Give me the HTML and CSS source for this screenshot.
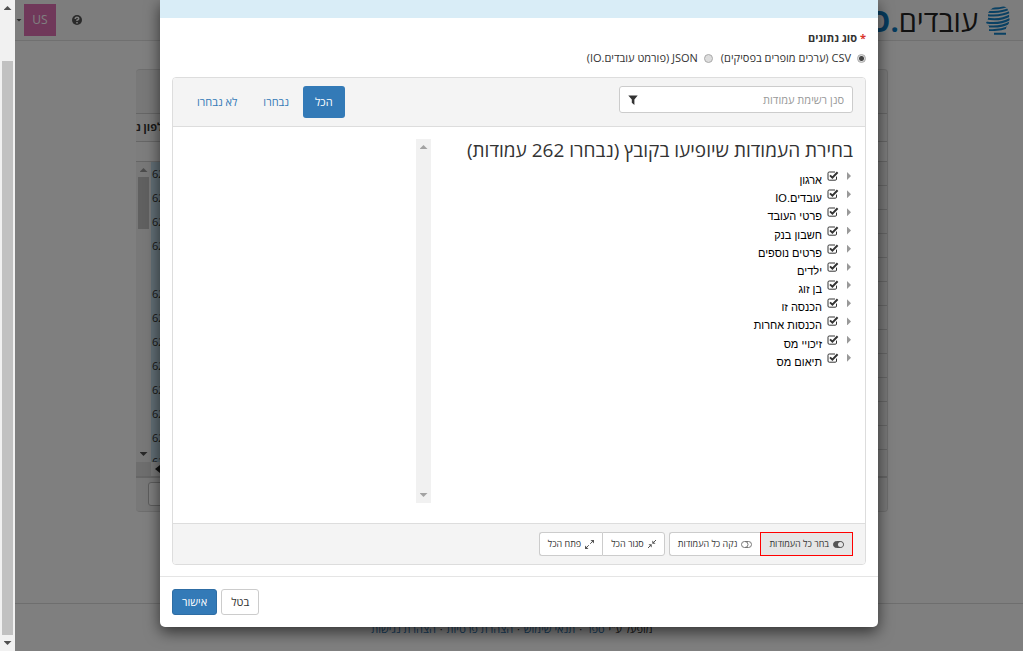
FILE: index.html
```html
<!DOCTYPE html>
<html lang="he" dir="rtl">
<head>
<meta charset="utf-8">
<title>עובדים.IO</title>
<link rel="stylesheet" href="styles.css">
</head>
<body>
<svg class="defs" aria-hidden="true">
  <symbol id="check" viewBox="0 0 12 12"><path d="M9.500 6.600V9a1.200 1.200 0 0 1-1.200 1.200H2.200A1.200 1.200 0 0 1 1 9V3.200A1.200 1.200 0 0 1 2.200 2H8" fill="none" stroke="currentColor"/><path d="M3 5.400l2.400 2.300L10.600 2.300" fill="none" stroke="currentColor" stroke-width="2"/></symbol>
  <symbol id="pencil" viewBox="0 0 10 12"><path d="M0 3l4-2-1 3-3 1zM0 8h2v3H0z" fill="currentColor"/></symbol>
</svg>
<div class="app">
  <div class="stage">
    <div class="page">
      <header class="navbar">
        <a class="brand" href="#">
          <svg width="24" height="29" viewBox="0 0 24 29" aria-hidden="true">
            <clipPath id="head"><path d="M2 7Q6 0 14 0Q21 0 22 4Q24 6 23 10Q25 16 20 22V29H8V25H3V20L0 17L2 13Z"/></clipPath>
            <g clip-path="url(#head)" fill="none" stroke="#1583c8" stroke-width="2"><path d="M0 2Q14 4 24-1M0 5.500Q14 7.500 24 2.500M0 9Q14 11 24 6M0 12.500Q14 15 24 9.500M0 16.500Q14 18.500 24 13M0 20Q14 22 24 16.500M2 24Q14 25 24 20.500M8 27.800H20"/></g>
          </svg>
          <span class="brand-name">עובדים<b>.IO</b></span>
        </a>
        <div class="nav-end">
          <svg width="10" height="10" viewBox="0 0 10 10" aria-hidden="true"><circle cx="5" cy="5" r="5" fill="#555"/><path d="M3.200 4q0-1.800 1.800-1.800T6.800 3.800Q6.800 4.600 5 5.300V6M5 7v1.400" fill="none" stroke="#fff" stroke-width="1.500"/></svg>
          <span class="avatar">US</span>
          <span class="caret"></span>
        </div>
      </header>
      <main class="grid-panel">
        <div class="grid-title"></div>
        <div class="grid-head"><svg width="10" height="12"><use href="#pencil"/></svg><b>טלפון נ</b></div>
        <div class="grid-filter"></div>
        <div class="grid-body">
          <div class="grid-rows">
            <div class="row"><svg width="10" height="12"><use href="#pencil"/></svg><span>62</span></div>
            <div class="row"><svg width="10" height="12"><use href="#pencil"/></svg><span>62</span></div>
            <div class="row"><svg width="10" height="12"><use href="#pencil"/></svg><span>62</span></div>
            <div class="row"><svg width="10" height="12"><use href="#pencil"/></svg><span>62</span></div>
            <div class="row"><svg width="10" height="12"><use href="#pencil"/></svg><span></span></div>
            <div class="row"><svg width="10" height="12"><use href="#pencil"/></svg><span>62</span></div>
            <div class="row"><svg width="10" height="12"><use href="#pencil"/></svg><span>62</span></div>
            <div class="row"><svg width="10" height="12"><use href="#pencil"/></svg><span>62</span></div>
            <div class="row"><svg width="10" height="12"><use href="#pencil"/></svg><span>62</span></div>
            <div class="row"><svg width="10" height="12"><use href="#pencil"/></svg><span>62</span></div>
            <div class="row"><svg width="10" height="12"><use href="#pencil"/></svg><span>62</span></div>
            <div class="row"><svg width="10" height="12"><use href="#pencil"/></svg><span>62</span></div>
            <div class="row"><svg width="10" height="12"><use href="#pencil"/></svg><span>62</span></div>
          </div>
          <div class="scroll grid-scroll"><i class="up"></i><i class="thumb"></i><i class="down"></i></div>
        </div>
        <div class="grid-hscroll"><i class="left"></i><i class="corner"></i></div>
        <div class="grid-foot"><span class="ghost"></span></div>
      </main>
      <footer class="page-foot">מופעל ע"י <a href="#">ספר</a> · <a href="#">תנאי שימוש</a> · <a href="#">הצהרת פרטיות</a> · <a href="#">הצהרת נגישות</a></footer>
    </div>
    <div class="backdrop">
      <form class="modal" role="dialog" aria-label="בחירת העמודות">
        <div class="modal-head"></div>
        <div class="modal-body">
          <fieldset>
            <legend><span class="star">*</span><span>סוג נתונים</span></legend>
            <div class="radios">
              <label><input type="radio" name="kind" checked> CSV (ערכים מופרים בפסיקים)</label>
              <label><input type="radio" name="kind"> JSON (פורמט עובדים.IO)</label>
            </div>
          </fieldset>
          <section class="panel">
            <div class="panel-head">
              <div class="search">
                <input type="text" placeholder="סנן רשימת עמודות" aria-label="סנן רשימת עמודות">
                <svg width="10" height="10" viewBox="0 0 10 10" aria-hidden="true"><path d="M.3.500h9.400L6.400 4.600V10L3.800 7.800V4.600z" fill="#333"/></svg>
              </div>
              <div class="pills">
                <button type="button" class="pill active">הכל</button>
                <button type="button" class="pill">נבחרו</button>
                <button type="button" class="pill">לא נבחרו</button>
              </div>
            </div>
            <div class="panel-body">
              <div class="columns">
                <h3>בחירת העמודות שיופיעו בקובץ (נבחרו 262 עמודות)</h3>
                <ul class="tree">
                  <li><i></i><svg><use href="#check"/></svg><span>ארגון</span></li>
                  <li><i></i><svg><use href="#check"/></svg><span>עובדים.IO</span></li>
                  <li><i></i><svg><use href="#check"/></svg><span>פרטי העובד</span></li>
                  <li><i></i><svg><use href="#check"/></svg><span>חשבון בנק</span></li>
                  <li><i></i><svg><use href="#check"/></svg><span>פרטים נוספים</span></li>
                  <li><i></i><svg><use href="#check"/></svg><span>ילדים</span></li>
                  <li><i></i><svg><use href="#check"/></svg><span>בן זוג</span></li>
                  <li><i></i><svg><use href="#check"/></svg><span>הכנסה זו</span></li>
                  <li><i></i><svg><use href="#check"/></svg><span>הכנסות אחרות</span></li>
                  <li><i></i><svg><use href="#check"/></svg><span>זיכויי מס</span></li>
                  <li><i></i><svg><use href="#check"/></svg><span>תיאום מס</span></li>
                </ul>
              </div>
              <div class="scroll list-scroll"><i class="up"></i><i class="down"></i></div>
            </div>
            <div class="panel-foot">
              <div class="group">
                <button type="button" class="small on"><svg width="11" height="7" viewBox="0 0 11 7"><rect x=".5" y=".5" width="10" height="6" rx="3" fill="#555" stroke="#555"/><circle cx="7.500" cy="3.500" r="2.500" fill="#e6e6e6"/></svg> בחר כל העמודות</button>
                <button type="button" class="small"><svg width="11" height="7" viewBox="0 0 11 7" fill="none" stroke="#777"><rect x=".5" y=".5" width="10" height="6" rx="3"/><path d="M4 .5a3 3 0 0 1 0 6"/></svg> נקה כל העמודות</button>
              </div>
              <div class="group">
                <button type="button" class="small"><svg width="8" height="8" viewBox="0 0 8 8" fill="#555" stroke="#555"><path d="M8 0L5.500 2.500M0 8l2.500-2.500"/><path d="M4.300 .5v3.200H7.500zM.5 4.300h3.200V7.500z" stroke="none"/></svg> סגור הכל</button>
                <button type="button" class="small"><svg width="9" height="9" viewBox="0 0 9 9" fill="#555" stroke="#555"><path d="M8 1L5.200 3.800M1 8l2.800-2.800"/><path d="M5.500 0H9v3.500zM0 5.500V9h3.500z" stroke="none"/></svg> פתח הכל</button>
              </div>
            </div>
          </section>
        </div>
        <div class="modal-foot">
          <button type="button" class="btn">בטל</button>
          <button type="submit" class="btn primary">אישור</button>
        </div>
      </form>
    </div>
  </div>
  <div class="scroll page-scroll"><i class="up"></i><i class="thumb"></i><i class="down"></i></div>
</div>
</body>
</html>
```
FILE: styles.css
```css
* { box-sizing: border-box; }
body { margin: 0; font: 11px/18px "Open Sans", "Noto Sans", sans-serif; color: #333; }
button, input { font: inherit; color: inherit; margin: 0; }
a { color: #337ab7; text-decoration: none; }
svg { flex: none; }
.defs { display: none; }
.app { display: flex; height: 100vh; overflow: hidden; }
.stage { flex: 1; position: relative; overflow: hidden; }

/* scroll bars */
.scroll { display: flex; flex-direction: column; align-items: center; background: #f1f1f1; width: 15px; flex: none; }
.up, .down { width: 8px; height: 4px; flex: none; background: #505050; }
.up { clip-path: polygon(50% 0, 100% 100%, 0 100%); }
.down { clip-path: polygon(0 0, 100% 0, 50% 100%); margin-top: auto; }
.page-scroll { padding: 6px 0; }
.page-scroll .thumb { width: 11px; flex: 1; margin: 51px 0 6px; background: #c1c1c1; }

/* page */
.navbar { height: 41px; background: #fafafa; border-bottom: 1px solid #e0e0e0; display: flex; justify-content: space-between; align-items: center; padding-right: 13px; }
.brand { display: flex; align-items: center; gap: 8px; color: #222; }
.brand-name { font-size: 29px; line-height: 38px; padding-top: 2px; }
.brand b { color: #0b77bd; }
.nav-end { display: flex; align-items: center; font-size: 12px; }
.avatar { width: 32px; height: 32px; margin-right: 16px; background: #e070b4; color: #fff; line-height: 32px; text-align: center; }
.caret { width: 6px; height: 3px; margin: 0 2px 0 1px; background: #555; clip-path: polygon(0 0, 100% 0, 50% 100%); }
.grid-panel { margin: 28px 135px 0 121px; background: #f0f0f0; border: 1px solid #ddd; border-left: 0; border-radius: 4px; overflow: hidden; }
.grid-title { height: 43px; }
.grid-head { display: flex; justify-content: space-between; border-top: 1px solid #ccc; height: 28px; line-height: 26px; background: #f5f5f5; padding-right: 4px; overflow: hidden; }
.grid-head b { width: 22px; white-space: nowrap; display: flex; justify-content: flex-end; }
.grid-head svg { margin-top: 6px; }
.grid-filter { height: 21px; border: solid #ccc; border-width: 1px 0; background: #fafafa; }
.grid-body { display: flex; height: 300px; }
.grid-rows { flex: 1; overflow: hidden; }
.row { display: flex; justify-content: space-between; height: 24px; border-bottom: 1px solid #ccc; padding-right: 4px; align-items: center; }
.row span { width: 16px; height: 24px; padding-left: 1px; line-height: 24px; background: #c3dcea; direction: ltr; }
.grid-scroll { background: #f1f1f1; padding: 6px 0; }
.grid-scroll .thumb { width: 11px; height: 52px; margin-top: 5px; background: #c1c1c1; }
.grid-scroll .up { background: #999; }
.grid-hscroll { height: 16px; background: #f1f1f1; border-bottom: 2px solid #ccc; display: flex; justify-content: flex-end; align-items: center; gap: 4px; }
.left { width: 5px; height: 8px; background: #222; clip-path: polygon(0 50%, 100% 0, 100% 100%); }
.corner { width: 15px; height: 14px; background: #dcdcdc; }
.grid-foot { padding: 4px 12px 5px; display: flex; justify-content: flex-end; background: #f0f0f0; }
.ghost { width: 40px; height: 24px; border: 1px solid #bbb; border-radius: 3px; background: #fff; }
.page-foot { margin-top: 91px; border-top: 1px solid #ddd; padding: 16px 15px 0 0; text-align: center; }
.page-foot a { margin: 0 1px; }

/* modal */
.backdrop { position: absolute; inset: 0; background: rgba(0, 0, 0, .5); overflow: hidden; }
.modal { max-width: 718px; margin: 0 auto; background: #fff; border-radius: 0 0 5px 5px; box-shadow: 0 5px 15px rgba(0, 0, 0, .6); }
.modal-head { height: 18px; background: #d9edf7; }
.modal-body { padding: 11px 12px; }
fieldset { border: 0; margin: 0; padding: 0; }
legend { display: flex; gap: 3px; padding: 0; font-weight: bold; line-height: 18px; }
.star { color: #d9342b; }
.radios { display: flex; gap: 8px; padding: 2px 0 10px; }
.radios label { display: flex; align-items: center; gap: 6px; }
.radios input { appearance: none; width: 9px; height: 9px; border: 1px solid #aaa; border-radius: 50%; background: #ddd; }
.radios input:checked { background: radial-gradient(circle, #444 0 2px, #ddd 3px); }
.panel { border: 1px solid #ddd; border-radius: 4px; overflow: hidden; }
.panel-head { display: flex; justify-content: space-between; align-items: flex-start; padding: 8px 12px; background: #f4f4f4; border-bottom: 1px solid #ddd; }
.search { display: flex; align-items: center; width: 234px; height: 27px; padding: 0 8px; border: 1px solid #ccc; border-radius: 3px; background: #fff; }
.search input { flex: 1; min-width: 0; border: 0; padding: 0; background: none; outline: 0; }
.search input::placeholder { color: #999; opacity: 1; }
.pills { display: flex; gap: 2px; }
.pill { height: 32px; padding: 0 12px; border: 0; border-radius: 3px; background: none; color: #337ab7; }
.pill.active { background: #337ab7; color: #fff; }
.panel-body { display: flex; padding: 12px 12px 20px; }
.columns { width: 422px; height: 364px; }
.list-scroll { padding: 6px 0; }
.list-scroll i { background: #a3a3a3; }
h3 { margin: 0; font-weight: normal; font-size: 19px; line-height: 22px; white-space: nowrap; }
.tree { margin: 6px 0 0; padding: 0; list-style: none; height: 200px; display: grid; grid-auto-rows: minmax(0, 1fr); font-family: "Liberation Sans", sans-serif; color: #000; }
.tree li { display: flex; align-items: flex-start; }
.tree i { width: 4px; height: 8px; margin: 5px 2px 0 8px; background: #999; clip-path: polygon(0 0, 100% 50%, 0 100%); }
.tree svg { width: 12px; height: 12px; margin: 3px 0 0 5px; color: #333; }
.tree span { line-height: 18px; margin-top: 4px; }
.panel-foot { display: flex; gap: 4px; padding: 8px 12px; background: #f4f4f4; border-top: 1px solid #ddd; }
.group { display: flex; }
.small { height: 24px; padding: 0 8px; border: 1px solid #ccc; background: #fff; font-size: 9px; display: flex; align-items: center; gap: 4px; white-space: nowrap; }
.small:first-child { border-radius: 0 3px 3px 0; }
.small:last-child { border-radius: 3px 0 0 3px; border-right: 0; }
.small.on { background: #e6e6e6; border: 1px solid #f00; border-radius: 0; }
.modal-foot { border-top: 1px solid #e5e5e5; padding: 12px; display: flex; justify-content: flex-end; gap: 4px; }
.btn { height: 26px; padding: 0 9px; border: 1px solid #ccc; border-radius: 3px; background: #fff; }
.btn.primary { background: #337ab7; border-color: #2e6da4; color: #fff; }
```
